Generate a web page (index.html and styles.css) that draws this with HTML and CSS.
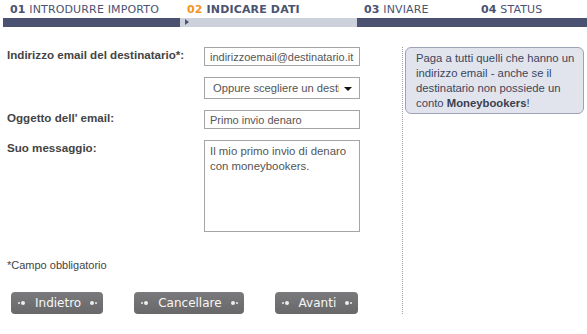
FILE: index.html
```html
<!DOCTYPE html>
<html lang="it">
<head>
  <meta charset="UTF-8" />
  <title>Invia denaro - Indicare dati</title>
  <link rel="stylesheet" href="styles.css">
</head>
<body>
  <div class="steps">
    <div class="step done"><span class="num">01</span> INTRODURRE IMPORTO</div>
    <div class="step current"><span class="num">02</span> INDICARE DATI</div>
    <div class="step"><span class="num">03</span> INVIARE</div>
    <div class="step"><span class="num">04</span> STATUS</div>
  </div>

  <div class="page">
    <div class="form">
      <div class="row">
        <label for="email">Indirizzo email del destinatario*:</label>
        <input type="text" id="email" class="field" value="indirizzoemail@destinatario.it" />
      </div>

      <div class="row">
        <span></span>
        <div class="select-wrap">
          <select class="field pick">
            <option>Oppure scegliere un destinatario</option>
          </select>
        </div>
      </div>

      <div class="row">
        <label for="subject">Oggetto dell' email:</label>
        <input type="text" id="subject" class="field" value="Primo invio denaro" />
      </div>

      <div class="row">
        <label for="msg">Suo messaggio:</label>
        <textarea id="msg" class="field message">Il mio primo invio di denaro con moneybookers.</textarea>
      </div>

      <p class="note">*Campo obbligatorio</p>

      <div class="buttons">
        <button class="btn"><span class="dots left"></span>Indietro<span class="dots right"></span></button>
        <button class="btn"><span class="dots left"></span>Cancellare<span class="dots right"></span></button>
        <button class="btn"><span class="dots left"></span>Avanti<span class="dots right"></span></button>
      </div>
    </div>

    <div class="side">
      <div class="info">
        Paga a tutti quelli che hanno un<br>
        indirizzo email - anche se il<br>
        destinatario non possiede un<br>
        conto <strong>Moneybookers</strong>!
      </div>
    </div>
  </div>
</body>
</html>
```

FILE: styles.css
```css
body {
  margin: 0;
  font-family: "Liberation Sans", Arial, sans-serif;
  font-size: 11.6px;
  color: #3c3c3c;
  background: #fff;
}

/* step bar */
.steps {
  display: grid;
  grid-template-columns: 177px 177px 117px 1fr;
  margin-left: 3px;
}

.step {
  position: relative;
  font-family: "DejaVu Sans", Verdana, sans-serif;
  font-size: 11px;
  color: #4a5372;
  padding: 3px 0 0 7px;
  height: 15px;
  border-bottom: 9px solid #4b5271;
  letter-spacing: 0.15px;
}

.step .num {
  font-weight: bold;
}

.step.current {
  border-bottom-color: #cdd1dc;
  font-weight: bold;
}

.step.current .num {
  color: #f7941e;
}

.step.current::after {
  content: "";
  position: absolute;
  left: 5px;
  bottom: -7px;
  border-left: 4px solid #4b5271;
  border-top: 3px solid transparent;
  border-bottom: 3px solid transparent;
}

/* main area */
.page {
  display: flex;
  margin-top: 20px;
}

.form {
  width: 395px;
  padding-left: 7px;
}

.row {
  display: grid;
  grid-template-columns: 197px 156px;
  margin-bottom: 11px;
}

.row label {
  font-weight: bold;
  color: #444;
  padding-top: 1px;
}

.field {
  box-sizing: border-box;
  width: 156px;
  height: 19px;
  margin: 0;
  padding: 0 4px 0 5px;
  border: 1px solid #a5a5a5;
  font-family: "Liberation Sans", Arial, sans-serif;
  font-size: 11px;
  color: #555;
  background: #fff;
}

.select-wrap {
  position: relative;
  width: 156px;
}

.pick {
  -webkit-appearance: none;
  appearance: none;
  height: 22px;
  padding: 0 20px 0 8px;
  border-radius: 0;
  font-size: 11.2px;
}

.select-wrap::after {
  content: "";
  position: absolute;
  right: 8px;
  top: 10px;
  border-top: 4px solid #111;
  border-left: 4px solid transparent;
  border-right: 4px solid transparent;
}

.message {
  height: 92px;
  padding: 3px 5px;
  resize: none;
  overflow: hidden;
  line-height: 15px;
  font-size: 11.4px;
}

.note {
  margin: 27px 0 0;
  font-size: 11px;
  color: #444;
}

.buttons {
  display: flex;
  gap: 31px;
  margin-top: 21px;
  padding-left: 4px;
}

.btn {
  display: flex;
  align-items: center;
  height: 22px;
  padding: 0 6px 0 7px;
  border: none;
  border-radius: 4px;
  background: linear-gradient(#7a7a7c, #68686a);
  color: #f6f6f6;
  font-family: "DejaVu Sans", Verdana, sans-serif;
  font-size: 12px;
}

.dots {
  display: inline-block;
  position: relative;
  width: 7px;
  height: 4px;
}

.dots.left { margin-right: 10px; }
.dots.right { margin-left: 9px; }

.dots::before,
.dots::after {
  content: "";
  position: absolute;
  background: #eee;
  border-radius: 50%;
}

.dots.left::before { left: 0; top: 1px; width: 2px; height: 2px; }
.dots.left::after { left: 3px; top: 0; width: 4px; height: 4px; }
.dots.right::before { left: 0; top: 0; width: 4px; height: 4px; }
.dots.right::after { left: 5px; top: 1px; width: 2px; height: 2px; }

/* side note */
.side {
  flex: 1;
  border-left: 1px dotted #a0a0a0;
  padding: 0 3px 0 2px;
  min-height: 267px;
}

.info {
  background: #e1e4ec;
  border: 1px solid #9ea3b3;
  border-radius: 6px;
  padding: 3px 4px 2px 10px;
  line-height: 15px;
  font-size: 11.3px;
  color: #3d4660;
  white-space: nowrap;
}

.info strong {
  color: #3a3f50;
}
```
